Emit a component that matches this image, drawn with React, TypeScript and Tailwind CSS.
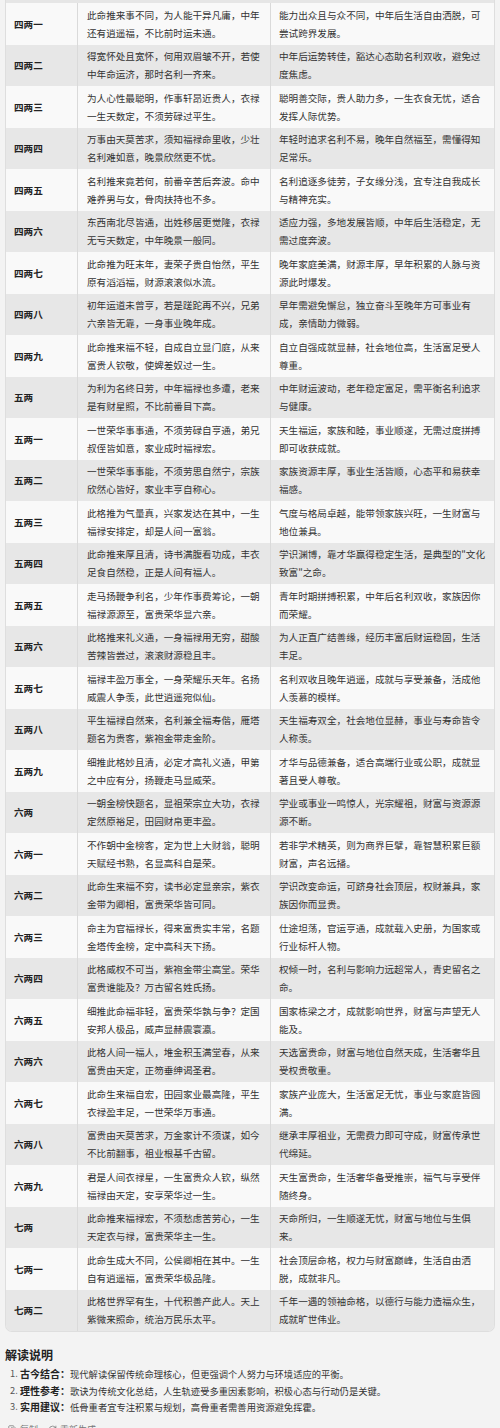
import { Copy, RefreshCw } from "lucide-react";

type Row = { weight: string; verse: string; meaning: string };

const rows: Row[] = [
  { weight: "四两一", verse: "此命推来事不同，为人能干异凡庸，中年还有逍遥福，不比前时运未通。", meaning: "能力出众且与众不同，中年后生活自由洒脱，可尝试跨界发展。" },
  { weight: "四两二", verse: "得宽怀处且宽怀，何用双眉皱不开，若使中年命运济，那时名利一齐来。", meaning: "中年后运势转佳，豁达心态助名利双收，避免过度焦虑。" },
  { weight: "四两三", verse: "为人心性最聪明，作事轩昂近贵人，衣禄一生天数定，不须劳碌过平生。", meaning: "聪明善交际，贵人助力多，一生衣食无忧，适合发挥人际优势。" },
  { weight: "四两四", verse: "万事由天莫苦求，须知福禄命里收，少壮名利难如意，晚景欣然更不忧。", meaning: "年轻时追求名利不易，晚年自然福至，需懂得知足常乐。" },
  { weight: "四两五", verse: "名利推来竟若何，前番辛苦后奔波。命中难养男与女，骨肉扶持也不多。", meaning: "名利追逐多徒劳，子女缘分浅，宜专注自我成长与精神充实。" },
  { weight: "四两六", verse: "东西南北尽皆通，出姓移居更觉隆，衣禄无亏天数定，中年晚景一般同。", meaning: "适应力强，多地发展皆顺，中年后生活稳定，无需过度奔波。" },
  { weight: "四两七", verse: "此命推为旺末年，妻荣子贵自怡然，平生原有滔滔福，财源滚滚似水流。", meaning: "晚年家庭美满，财源丰厚，早年积累的人脉与资源此时爆发。" },
  { weight: "四两八", verse: "初年运道未曾亨，若是蹉跎再不兴，兄弟六亲皆无靠，一身事业晚年成。", meaning: "早年需避免懈怠，独立奋斗至晚年方可事业有成，亲情助力微弱。" },
  { weight: "四两九", verse: "此命推来福不轻，自成自立显门庭，从来富贵人钦敬，使婢差奴过一生。", meaning: "自立自强成就显赫，社会地位高，生活富足受人尊重。" },
  { weight: "五两", verse: "为利为名终日劳，中年福禄也多遭，老来是有财星照，不比前番目下高。", meaning: "中年财运波动，老年稳定富足，需平衡名利追求与健康。" },
  { weight: "五两一", verse: "一世荣华事事通，不须劳碌自亨通，弟兄叔侄皆如意，家业成时福禄宏。", meaning: "天生福运，家族和睦，事业顺遂，无需过度拼搏即可收获成就。" },
  { weight: "五两二", verse: "一世荣华事事能，不须劳思自然宁，宗族欣然心皆好，家业丰亨自称心。", meaning: "家族资源丰厚，事业生活皆顺，心态平和易获幸福感。" },
  { weight: "五两三", verse: "此格推为气量真，兴家发达在其中，一生福禄安排定，却是人间一富翁。", meaning: "气度与格局卓越，能带领家族兴旺，一生财富与地位兼具。" },
  { weight: "五两四", verse: "此命推来厚且清，诗书满腹看功成，丰衣足食自然稳，正是人间有福人。", meaning: "学识渊博，靠才华赢得稳定生活，是典型的\"文化致富\"之命。" },
  { weight: "五两五", verse: "走马扬鞭争利名，少年作事费筹论，一朝福禄源源至，富贵荣华显六亲。", meaning: "青年时期拼搏积累，中年后名利双收，家族因你而荣耀。" },
  { weight: "五两六", verse: "此格推来礼义通，一身福禄用无穷，甜酸苦辣皆尝过，滚滚财源稳且丰。", meaning: "为人正直广结善缘，经历丰富后财运稳固，生活丰足。" },
  { weight: "五两七", verse: "福禄丰盈万事全，一身荣耀乐天年。名扬威震人争羡，此世逍遥宛似仙。", meaning: "名利双收且晚年逍遥，成就与享受兼备，活成他人羡慕的模样。" },
  { weight: "五两八", verse: "平生福禄自然来，名利兼全福寿偕，雁塔题名为贵客，紫袍金带走金阶。", meaning: "天生福寿双全，社会地位显赫，事业与寿命皆令人称羡。" },
  { weight: "五两九", verse: "细推此格妙且清，必定才高礼义通，甲第之中应有分，扬鞭走马显威荣。", meaning: "才华与品德兼备，适合高端行业或公职，成就显著且受人尊敬。" },
  { weight: "六两", verse: "一朝金榜快题名，显祖荣宗立大功，衣禄定然原裕足，田园财帛更丰盈。", meaning: "学业或事业一鸣惊人，光宗耀祖，财富与资源源源不断。" },
  { weight: "六两一", verse: "不作朝中金榜客，定为世上大财翁，聪明天赋经书熟，名显高科自是荣。", meaning: "若非学术精英，则为商界巨擘，靠智慧积累巨额财富，声名远播。" },
  { weight: "六两二", verse: "此命生来福不穷，读书必定显亲宗，紫衣金带为卿相，富贵荣华皆可同。", meaning: "学识改变命运，可跻身社会顶层，权财兼具，家族因你而显贵。" },
  { weight: "六两三", verse: "命主为官福禄长，得来富贵实丰常，名题金塔传金榜，定中高科天下扬。", meaning: "仕途坦荡，官运亨通，成就载入史册，为国家或行业标杆人物。" },
  { weight: "六两四", verse: "此格威权不可当，紫袍金带尘高堂。荣华富贵谁能及？万古留名姓氏扬。", meaning: "权倾一时，名利与影响力远超常人，青史留名之命。" },
  { weight: "六两五", verse: "细推此命福非轻，富贵荣华孰与争？定国安邦人极品，威声显赫震寰瀛。", meaning: "国家栋梁之才，成就影响世界，财富与声望无人能及。" },
  { weight: "六两六", verse: "此格人间一福人，堆金积玉满堂春，从来富贵由天定，正笏垂绅谒圣君。", meaning: "天选富贵命，财富与地位自然天成，生活奢华且受权贵敬重。" },
  { weight: "六两七", verse: "此命生来福自宏，田园家业最高隆，平生衣禄盈丰足，一世荣华万事通。", meaning: "家族产业庞大，生活富足无忧，事业与家庭皆圆满。" },
  { weight: "六两八", verse: "富贵由天莫苦求，万金家计不须谋，如今不比前翻事，祖业根基千古留。", meaning: "继承丰厚祖业，无需费力即可守成，财富传承世代绵延。" },
  { weight: "六两九", verse: "君是人间衣禄星，一生富贵众人钦，纵然福禄由天定，安享荣华过一生。", meaning: "天生富贵命，生活奢华备受推崇，福气与享受伴随终身。" },
  { weight: "七两", verse: "此命推来福禄宏，不须愁虑苦劳心，一生天定衣与禄，富贵荣华主一生。", meaning: "天命所归，一生顺遂无忧，财富与地位与生俱来。" },
  { weight: "七两一", verse: "此命生成大不同，公侯卿相在其中。一生自有逍遥福，富贵荣华极品隆。", meaning: "社会顶层命格，权力与财富巅峰，生活自由洒脱，成就非凡。" },
  { weight: "七两二", verse: "此格世界罕有生，十代积善产此人。天上紫微来照命，统治万民乐太平。", meaning: "千年一遇的领袖命格，以德行与能力造福众生，成就旷世伟业。" },
];

const notes = [
  { label: "古今结合", text: "现代解读保留传统命理核心，但更强调个人努力与环境适应的平衡。" },
  { label: "理性参考", text: "歌诀为传统文化总结，人生轨迹受多重因素影响，积极心态与行动仍是关键。" },
  { label: "实用建议", text: "低骨重者宜专注积累与规划，高骨重者需善用资源避免挥霍。" },
];

const App = () => {
  return (
    <div
      className="min-h-[1428px] bg-[#f3f3f3] text-[#333] overflow-hidden"
      style={{ fontFamily: '"Noto Sans CJK SC", "Noto Sans", sans-serif' }}
    >
      {/* Table */}
      <div className="mx-[5px] w-[490px] rounded-b-[7px] overflow-hidden border-x border-b border-[#dedede]">
        <div className="h-[3px] bg-[#e6e6e6]" />
        {rows.map((row, i) => (
          <div
            key={row.weight}
            className={
              "grid grid-cols-[72px_193px_1fr] text-[9.6px] leading-[18px] " +
              (i % 2 === 0 ? "bg-[#f9f9f9]" : "bg-[#e7e7e7]")
            }
          >
            <div className="flex items-center pl-[8px] font-bold text-[#222] border-r border-[#dadada]">
              {row.weight}
            </div>
            <div className="py-[2.75px] pl-[9px] pr-[6px] border-r border-[#dadada]">{row.verse}</div>
            <div className="py-[2.75px] pl-[8px] pr-[6px]">{row.meaning}</div>
          </div>
        ))}
      </div>

      {/* Notes */}
      <div className="px-[5px] pt-[15px]">
        <h3 className="text-[12px] font-bold text-[#222] leading-[16px]">解读说明</h3>
        <ol className="mt-[3px] pl-[5px] text-[9.3px] leading-[15.5px] text-[#333]">
          {notes.map((n, i) => (
            <li key={n.label} className="flex">
              <span className="w-[8px] text-[#555]">{i + 1}.</span>
              <span className="ml-[2px]">
                <span className="font-bold text-[#222] text-[10px]">{n.label}：</span>
                {n.text}
              </span>
            </li>
          ))}
        </ol>
        <div className="mt-[7px] flex items-center gap-[10px] pl-[3px] text-[9px] text-[#777]">
          <span className="flex items-center gap-[3px]">
            <Copy size={9} />
            复制
          </span>
          <span className="flex items-center gap-[3px]">
            <RefreshCw size={9} />
            重新生成
          </span>
        </div>
      </div>
    </div>
  );
};

export default App;
